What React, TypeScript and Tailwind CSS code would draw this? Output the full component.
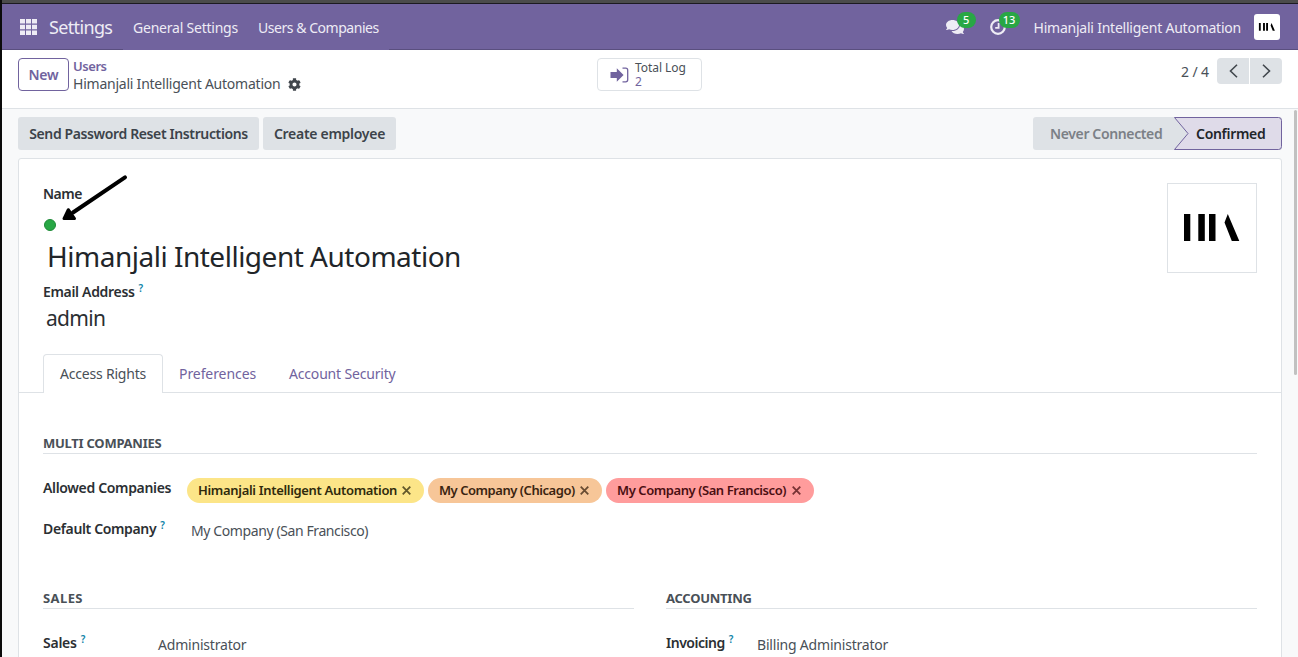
import React from "react";
import { FaCog, FaComments } from "react-icons/fa";

function BarsLogo({ className }: { className: string }) {
  return (
    <svg viewBox="0 0 90 90" className={className} fill="#000">
      <path d="M17 31h6.3v27H17zM31.3 31h6.5v27h-6.5zM42 31h6.5v27H42zM60.8 31l11.5 27h-7.5L57.5 39.5z" />
    </svg>
  );
}

function Label({ children, help, className }: { children: string; help?: boolean; className?: string }) {
  return (
    <div className="flex items-start font-semibold text-[#2b2f33]">
      <span className={className}>{children}</span>
      {help && <span className="-mt-1 ml-1 text-[10px] text-[#0f84a8]">?</span>}
    </div>
  );
}

function Tag({ text, className, textClass }: { text: string; className: string; textClass: string }) {
  return (
    <div className={`flex h-[25px] items-center justify-between rounded-full pr-[13px] pl-[11px] text-[13px] leading-[25px] font-semibold ${className}`}>
      <span className={textClass}>{text}</span>
      <svg viewBox="0 0 10 10" className="size-[9px] opacity-75" stroke="currentColor" strokeWidth="2">
        <path d="M0.8 0.8l8.4 8.4M9.2 0.8L0.8 9.2" />
      </svg>
    </div>
  );
}

function Navbar() {
  return (
    <header className="flex h-[46px] shrink-0 items-center bg-[#71639e] text-[#eeecf5]">
      <div className="flex h-full w-[121px] items-center border-b border-[#5a4f7f] pl-[18px]">
        <svg viewBox="0 0 17 16" className="h-4 w-[17px]" fill="currentColor">
          <path d="M0 0h5v4.5H0zM6 0h5v4.5H6zM12 0h5v4.5h-5zM0 5.7h5v4.6H0zM6 5.7h5v4.6H6zM12 5.7h5v4.6h-5zM0 11.5h5V16H0zM6 11.5h5V16H6zM12 11.5h5V16h-5z" />
        </svg>
        <span className="ml-3 text-[18px] tracking-[-0.65px]">Settings</span>
      </div>
      <nav className="flex w-[266px] items-center pt-px pl-[10px]">
        <span className="w-[125px] tracking-[-0.22px]">General Settings</span>
        <span className="tracking-[-0.46px]">Users &amp; Companies</span>
      </nav>
      <div className="flex h-full grow items-center justify-end border-b border-[#5a4f7f] pr-[18px]">
        <div className="relative mr-[26px]">
          <FaComments className="size-[18px]" />
          <span className="absolute -top-[6px] left-[11px] flex h-4 w-[19px] items-center justify-center rounded-full bg-[#28a745] text-[11px] font-medium text-white">5</span>
        </div>
        <div className="relative mr-[28px]">
          <svg viewBox="0 0 16 16" className="size-4" fill="none" stroke="currentColor" strokeWidth="2.2">
            <circle cx="8" cy="8" r="6.8" />
            <path d="M8.6 4v4.8H5.2" strokeWidth="1.8" />
          </svg>
          <span className="absolute -top-[7px] left-[9px] flex h-4 w-[21px] items-center justify-center rounded-full bg-[#28a745] text-[11px] font-medium text-white">13</span>
        </div>
        <span className="mr-[13px] pt-[2px] tracking-[-0.23px]">Himanjali Intelligent Automation</span>
        <div className="flex size-[26px] items-center justify-center rounded-[3px] bg-white">
          <BarsLogo className="size-[26px]" />
        </div>
      </div>
    </header>
  );
}

function ControlPanel() {
  return (
    <div className="flex h-[59px] shrink-0 items-start border-b border-[#dee2e6] bg-white pr-4 pl-4 pt-2">
      <button className="h-[33px] w-[51px] rounded-[4px] border border-[#71639e] font-semibold tracking-[-0.2px] text-[#71639e]">New</button>
      <div className="ml-1 w-[524px]">
        <div className="h-[17px] text-[13px] leading-[17px] font-semibold tracking-[-0.45px] text-[#71639e]">Users</div>
        <div className="flex h-[18px] items-center text-[#495057]">
          <span className="tracking-[-0.23px]">Himanjali Intelligent Automation</span>
          <FaCog className="ml-2 size-[13px] text-[#41474d]" />
        </div>
      </div>
      <button className="flex h-[33px] w-[105px] items-center rounded-[4px] border border-[#dee2e6] pl-3 text-left text-[12px]">
        <svg viewBox="0 0 19 16" className="h-4 w-[19px]" fill="none">
          <path d="M.5 5h6.3V1.2L13.6 8l-6.8 6.8V11H.5z" fill="#71639e" />
          <path d="M12.5 1.2h3.2q2 0 2 2v9.6q0 2-2 2h-3.2" stroke="#71639e" strokeWidth="1.3" />
        </svg>
        <div className="ml-[6px] pt-px leading-[14px]">
          <div className="tracking-[-0.05px] text-[#495057]">Total Log</div>
          <div className="text-[#71639e]">2</div>
        </div>
      </button>
      <div className="flex grow items-center justify-end">
        <span className="mr-2 pt-[2px] tracking-[-0.1px] text-[#495057]">2 / 4</span>
        <div className="flex gap-px text-[#41474d]">
          <button className="flex h-[26px] w-8 items-center justify-center rounded-l-[4px] bg-[#dee2e6]">
            <svg viewBox="0 0 9 14" className="h-[14px] w-[9px]" fill="none" stroke="currentColor" strokeWidth="1.6"><path d="M8 .7L1.5 7 8 13.3" /></svg>
          </button>
          <button className="flex h-[26px] w-8 items-center justify-center rounded-r-[4px] bg-[#dee2e6]">
            <svg viewBox="0 0 9 14" className="h-[14px] w-[9px]" fill="none" stroke="currentColor" strokeWidth="1.6"><path d="M1 .7L7.5 7 1 13.3" /></svg>
          </button>
        </div>
      </div>
    </div>
  );
}

function StatusBar() {
  return (
    <div className="flex h-[33px] shrink-0 items-stretch font-semibold text-[#3c434a]">
      <button className="w-[241px] rounded-[3px] bg-[#dee2e6] tracking-[-0.38px]">Send Password Reset Instructions</button>
      <button className="ml-1 w-[133px] rounded-[3px] bg-[#dee2e6] tracking-[-0.28px]">Create employee</button>
      <div className="relative ml-auto flex w-[249px] items-center rounded-[3px] bg-[#dee2e6]">
        <svg viewBox="0 0 109 33" className="absolute right-0 h-[33px] w-[109px]" fill="#dfdbe9" stroke="#71639e">
          <path d="M1.5 .5H105.5q3 0 3 3v26q0 3-3 3H1.5L15 16.5z" />
        </svg>
        <span className="ml-[17px] w-[146px] tracking-[-0.37px] text-[#7b8086]">Never Connected</span>
        <span className="relative tracking-[-0.3px] text-[#212529]">Confirmed</span>
      </div>
    </div>
  );
}

function SectionTitle({ text, className }: { text: string; className: string }) {
  return (
    <div className="h-[21px] border-b border-[#dee2e6] text-[13px] leading-[20px] font-bold text-[#495057]">
      <span className={className}>{text}</span>
    </div>
  );
}

export default function App() {
  return (
    <div className="relative flex h-[657px] w-[1298px] flex-col overflow-hidden border-l-2 border-[#0b0b0b] bg-[#f8f9fa] text-[14px] leading-5 whitespace-nowrap [font-family:'Noto_Sans',sans-serif]">
      <div className="h-1 shrink-0 border-b border-[#1c1a20] bg-[#4b4b4b]" />
      <Navbar />
      <ControlPanel />
      <main className="flex grow flex-col overflow-hidden px-4 pt-2">
        <StatusBar />
        <section className="mt-2 h-[520px] w-[1264px] shrink-0 rounded-t-[3px] border border-[#dee2e6] bg-white">
          <div className="flex h-[195px] justify-between px-6 pt-6">
            <div className="pt-px">
              <Label className="tracking-[-0.5px]">Name</Label>
              <div className="mt-[15px] ml-px size-3 rounded-full border border-[#1e8a38] bg-[#28a745]" />
              <div className="mt-[6px] h-[38px] pl-1 text-[28px] leading-[38px] tracking-[-0.49px] text-[#212529]">Himanjali Intelligent Automation</div>
              <div className="mt-[7px]">
                <Label help className="tracking-[-0.32px]">Email Address</Label>
              </div>
              <div className="mt-[2px] pl-[3px] text-[21px] leading-7 tracking-[-0.7px] text-[#2b2f33]">admin</div>
            </div>
            <div className="size-[90px] border border-[#dee2e6]">
              <BarsLogo className="-mt-px -ml-px size-[90px]" />
            </div>
          </div>
          <div className="flex h-[39px] items-stretch leading-[38px]">
            <div className="w-6 border-b border-[#dee2e6]" />
            <div className="w-[120px] rounded-t-[4px] border border-b-0 border-[#dee2e6] pl-4 tracking-[-0.2px] text-[#495057]">Access Rights</div>
            <div className="flex grow border-b border-[#dee2e6] pt-px text-[#71639e]">
              <span className="ml-4 w-[110px] tracking-[-0.08px]">Preferences</span>
              <span className="tracking-[-0.18px]">Account Security</span>
            </div>
          </div>
          <div className="px-6">
            <div className="mt-10">
              <SectionTitle text="MULTI COMPANIES" className="tracking-[-0.25px]" />
            </div>
            <div className="mt-6 flex h-[25px]">
              <div className="w-36"><Label className="tracking-[-0.34px]">Allowed Companies</Label></div>
              <div className="flex gap-1">
                <Tag text="Himanjali Intelligent Automation" className="w-[237px] bg-[#fce588] text-[#2f2a0c]" textClass="tracking-[-0.32px]" />
                <Tag text="My Company (Chicago)" className="w-[174px] bg-[#f7c698] text-[#3a2410]" textClass="tracking-[-0.46px]" />
                <Tag text="My Company (San Francisco)" className="w-[208px] bg-[#ff9c9c] text-[#4a0f12]" textClass="tracking-[-0.43px]" />
              </div>
            </div>
            <div className="mt-4 flex">
              <div className="w-[148px]"><Label help className="tracking-[-0.36px]">Default Company</Label></div>
              <span className="pt-[2px] tracking-[-0.4px] text-[#495057]">My Company (San Francisco)</span>
            </div>
            <div className="mt-[47px] grid grid-cols-2 gap-8">
              <div>
                <SectionTitle text="SALES" className="tracking-[0.4px]" />
                <div className="mt-6 flex">
                  <div className="w-[115px]"><Label help className="tracking-[-0.25px]">Sales</Label></div>
                  <span className="pt-[2px] tracking-[-0.2px] text-[#495057]">Administrator</span>
                </div>
              </div>
              <div>
                <SectionTitle text="ACCOUNTING" className="tracking-[-0.25px]" />
                <div className="mt-6 flex">
                  <div className="w-[91px]"><Label help className="tracking-[-0.48px]">Invoicing</Label></div>
                  <span className="pt-[2px] tracking-[-0.2px] text-[#495057]">Billing Administrator</span>
                </div>
              </div>
            </div>
          </div>
        </section>
      </main>
      <svg viewBox="0 0 68 50" className="absolute top-[174px] left-[59px] h-[50px] w-[68px]">
        <path d="M64 3.3L12 38.5" stroke="#000" strokeWidth="4" strokeLinecap="round" />
        <path d="M3 44.6L7.3 35.7 13.5 44.6z" fill="#000" stroke="#000" strokeWidth="3" strokeLinejoin="round" />
      </svg>
      <div className="absolute top-[110px] right-px h-[265px] w-[3px] rounded-full bg-[#c1c1c1]" />
    </div>
  );
}
